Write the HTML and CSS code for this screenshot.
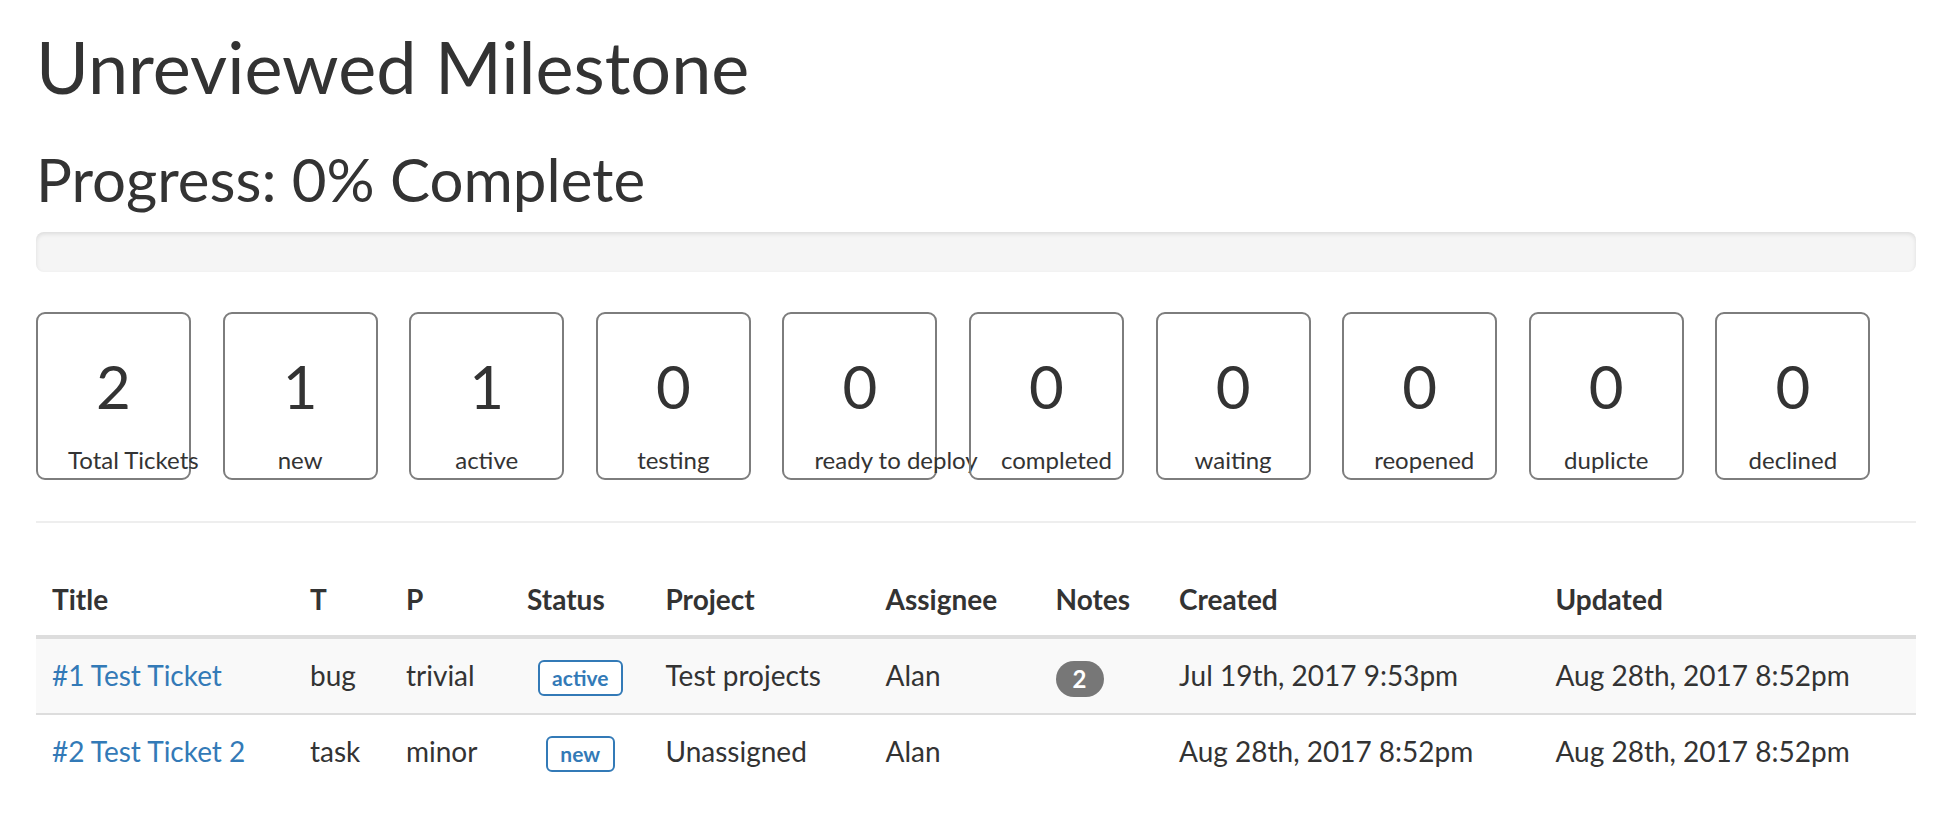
FILE: index.html
```html
<!DOCTYPE html>
<html lang="en">
<head>
<meta charset="utf-8">
<title>Unreviewed Milestone</title>
<link rel="stylesheet" href="styles.css">
</head>
<body>
<div class="page">
  <h1 class="title">Unreviewed Milestone</h1>
  <h2 class="subtitle">Progress: 0% Complete</h2>
  <div class="progress"><div class="progress-bar" style="width:0%"></div></div>

  <div class="stats">
    <div class="stat"><div class="stat-num">2</div><div class="stat-label">Total Tickets</div></div>
    <div class="stat"><div class="stat-num">1</div><div class="stat-label">new</div></div>
    <div class="stat"><div class="stat-num">1</div><div class="stat-label">active</div></div>
    <div class="stat"><div class="stat-num">0</div><div class="stat-label">testing</div></div>
    <div class="stat"><div class="stat-num">0</div><div class="stat-label">ready to deploy</div></div>
    <div class="stat"><div class="stat-num">0</div><div class="stat-label">completed</div></div>
    <div class="stat"><div class="stat-num">0</div><div class="stat-label">waiting</div></div>
    <div class="stat"><div class="stat-num">0</div><div class="stat-label">reopened</div></div>
    <div class="stat"><div class="stat-num">0</div><div class="stat-label">duplicte</div></div>
    <div class="stat"><div class="stat-num">0</div><div class="stat-label">declined</div></div>
  </div>

  <hr class="divider">

  <table class="tickets">
    <colgroup>
      <col class="c-title"><col class="c-type"><col class="c-prio"><col class="c-status"><col class="c-project"><col class="c-assignee"><col class="c-notes"><col class="c-created"><col class="c-updated">
    </colgroup>
    <thead>
      <tr>
        <th>Title</th><th>T</th><th>P</th><th>Status</th><th>Project</th><th>Assignee</th><th>Notes</th><th>Created</th><th>Updated</th>
      </tr>
    </thead>
    <tbody>
      <tr>
        <td><a class="link" href="#">#1 Test Ticket</a></td>
        <td>bug</td>
        <td>trivial</td>
        <td class="center"><span class="status">active</span></td>
        <td>Test projects</td>
        <td>Alan</td>
        <td><span class="badge">2</span></td>
        <td>Jul 19th, 2017 9:53pm</td>
        <td>Aug 28th, 2017 8:52pm</td>
      </tr>
      <tr>
        <td><a class="link" href="#">#2 Test Ticket 2</a></td>
        <td>task</td>
        <td>minor</td>
        <td class="center"><span class="status">new</span></td>
        <td>Unassigned</td>
        <td>Alan</td>
        <td></td>
        <td>Aug 28th, 2017 8:52pm</td>
        <td>Aug 28th, 2017 8:52pm</td>
      </tr>
    </tbody>
  </table>
</div>
</body>
</html>
```

FILE: styles.css
```css
html, body {
  margin: 0;
  padding: 0;
  background: #fff;
}

body {
  font-family: Lato, "Open Sans", "Liberation Sans", sans-serif;
  font-size: 28px;
  line-height: 40px;
  color: #333;
}

.page {
  padding: 27px 26px 0 36px;
}

.title {
  font-size: 72px;
  font-weight: 400;
  line-height: 1.1;
  margin: 0 0 20px;
}

.subtitle {
  font-size: 60px;
  font-weight: 400;
  line-height: 1.1;
  margin: 40px 0 20px;
}

.progress {
  height: 40px;
  background: #f5f5f5;
  border-radius: 8px;
  box-shadow: inset 0 2px 4px rgba(0, 0, 0, 0.1);
  margin-bottom: 40px;
  overflow: hidden;
}

.progress-bar {
  height: 100%;
  background: #337ab7;
}

.stats {
  display: flex;
  gap: 31.6px;
}

.stat {
  box-sizing: border-box;
  flex: 0 0 155px;
  width: 155px;
  height: 168px;
  border: 2px solid #7d7d7d;
  border-radius: 9px;
  padding: 39px 30px 0;
  text-align: center;
}

.stat-num {
  font-size: 60px;
  line-height: 66px;
}

.stat-label {
  font-size: 24px;
  line-height: 34px;
  margin-top: 24px;
  white-space: nowrap;
}

.divider {
  border: 0;
  border-top: 2px solid #eee;
  margin: 41px 0 40px;
}

.tickets {
  width: 100%;
  border-collapse: collapse;
  table-layout: fixed;
  margin-bottom: 40px;
}

.c-title { width: 258px; }
.c-type { width: 96px; }
.c-prio { width: 121px; }
.c-status { width: 138.5px; }
.c-project { width: 220px; }
.c-assignee { width: 170px; }
.c-notes { width: 123.6px; }
.c-created { width: 376.4px; }

.tickets th {
  text-align: left;
  font-weight: 700;
  padding: 16px;
  line-height: 40px;
  vertical-align: bottom;
  border-bottom: 4px solid #ddd;
  white-space: nowrap;
}

.tickets td {
  padding: 16px;
  line-height: 40px;
  vertical-align: top;
  border-top: 2px solid #ddd;
  white-space: nowrap;
}

.tickets tbody tr:nth-child(odd) {
  background: #f9f9f9;
}

.tickets td.center {
  text-align: center;
}

.link {
  color: #337ab7;
  text-decoration: none;
}

.status {
  display: inline-block;
  font-size: 21px;
  font-weight: 700;
  line-height: 21px;
  padding: 5px 12.6px 6px;
  border: 2px solid #337ab7;
  border-radius: 6px;
  color: #337ab7;
  background: #fff;
}

.badge {
  display: inline-block;
  min-width: 20px;
  padding: 6px 14px;
  font-size: 24px;
  font-weight: 700;
  line-height: 24px;
  color: #fff;
  text-align: center;
  vertical-align: middle;
  background: #777;
  border-radius: 20px;
}
```
